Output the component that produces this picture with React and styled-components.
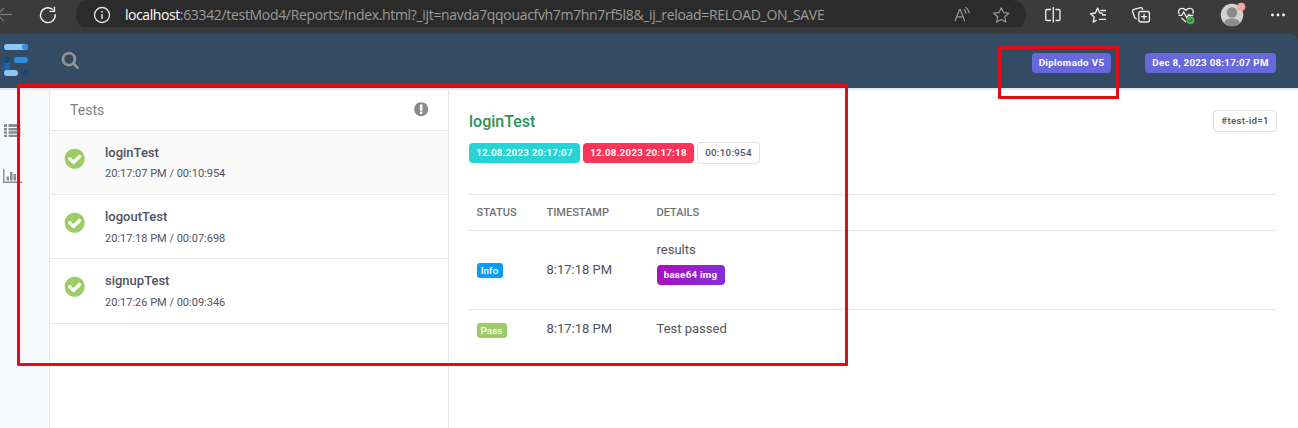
import React from "react";
import styled, { createGlobalStyle } from "styled-components";

const Global = createGlobalStyle`
  * { box-sizing: border-box; }
  body { margin: 0; background: #fff; font-family: Roboto, sans-serif; color: #515365; overflow: hidden; }
`;

const Page = styled.div`
  position: relative;
  width: 1298px;
  height: 428px;
  overflow: hidden;
  display: flex;
  flex-direction: column;
  background: #fff;
`;

const BrowserBar = styled.div`
  height: 34px;
  flex: none;
  display: flex;
  background: #3b3b3b;
`;
const NavButtons = styled.div`
  width: 76px;
  height: 30px;
  flex: none;
`;
const AddressField = styled.div`
  width: 950px;
  height: 30px;
  flex: none;
  display: flex;
  align-items: center;
  background: #2b2b2b;
  border-radius: 13px 15px 15px 15px;
  padding-left: 17px;
`;
const Url = styled.div`
  width: 828px;
  margin-left: 14px;
  font: 14px/20px "Open Sans", "Noto Sans", sans-serif;
  letter-spacing: -0.325px;
  color: #9c9c9c;
  white-space: nowrap;
  b { font-weight: 400; color: #fff; letter-spacing: -0.43px; }
`;
const AddressActions = styled.svg`
  flex: none;
  margin-left: 1px;
`;
const BrowserTools = styled.div`
  width: 272px;
  height: 30px;
`;

const Header = styled.header`
  height: 56px;
  flex: none;
  display: flex;
  align-items: flex-start;
  background: #344b64;
  border-bottom: 2px solid #e6e8ef;
  border-top-right-radius: 7px;
  box-shadow: 7px -7px 0 #3b3b3b;
`;
const HeaderIcons = styled.div`
  width: 100px;
  height: 54px;
  flex: none;
`;
const HeaderBadges = styled.div`
  display: flex;
  gap: 34px;
  margin: 19px 22px 0 auto;
`;

const badgeTones = {
  indigo: "background:#6868dd;color:#fff;",
  cyan: "background:#26d3d5;color:#fff;",
  red: "background:#fb3459;color:#fff;",
  purple: "background:linear-gradient(120deg,#ae0cbc,#7f31db);color:#fff;",
  outline: "background:#fff;color:#515365;border:1px solid #dcdee2;",
};
const Badge = styled.span`
  display: inline-block;
  width: ${(p) => p.$width}px;
  height: ${(p) => (p.$tone === "outline" ? 22 : 20)}px;
  line-height: 20px;
  border-radius: 4px;
  text-align: center;
  white-space: nowrap;
  font-size: 9.75px;
  font-weight: ${(p) => (p.$tone === "outline" ? 500 : 700)};
  letter-spacing: ${(p) => p.$spacing || "0.25px"};
  ${(p) => badgeTones[p.$tone]}
`;
const StatusTag = styled.span`
  display: block;
  width: ${(p) => p.$width}px;
  height: 15px;
  margin-top: ${(p) => p.$offset || 0}px;
  line-height: 15px;
  border-radius: 3px;
  text-align: center;
  font-size: 9.75px;
  font-weight: 500;
  letter-spacing: 0.1px;
  color: #fff;
  background: ${(p) => p.$color};
`;

const Body = styled.div`
  flex: 1;
  display: flex;
  min-height: 0;
`;
const SideNav = styled.nav`
  width: 50px;
  flex: none;
  background: #f7faff;
  border-right: 1px solid #e8e9ec;
`;
const TestList = styled.section`
  width: 399px;
  flex: none;
  border-right: 1px solid #e6e7e9;
`;
const ListHeader = styled.div`
  height: 41px;
  padding: 0 20px;
  display: flex;
  justify-content: space-between;
  border-bottom: 1px solid #e8e8ea;
  font-size: 14px;
  line-height: 41px;
  letter-spacing: 0.05px;
  color: #818286;
`;
const ListIcon = styled.svg`
  display: block;
  width: 16.4px;
  height: 16.4px;
  margin: 11px -1px 0 0;
`;
const TestRow = styled.div`
  height: ${(p) => p.$height}px;
  display: flex;
  padding: 0 13px;
  border-bottom: 1px solid #e8e8ea;
  background: ${(p) => (p.$active ? "#fafafa" : "#fff")};
`;
const CheckIcon = styled.svg`
  width: 23.4px;
  height: 23.4px;
  margin: 16.3px 18.3px 0 0.3px;
  flex: none;
`;
const TestName = styled.div`
  margin-top: 13px;
  font-size: 13px;
  line-height: 18px;
  font-weight: 500;
  color: #4e5063;
`;
const TestTime = styled.div`
  margin-top: ${(p) => p.$gap}px;
  font-size: 11px;
  line-height: 15px;
  color: #515365;
`;

const Details = styled.main`
  flex: 1;
  padding: 20px 21px 0 20px;
`;
const DetailsTop = styled.div`
  height: 84px;
  display: flex;
  justify-content: space-between;
`;
const Title = styled.h1`
  margin: 1px 0 9px;
  font-size: 16px;
  line-height: 22px;
  font-weight: 500;
  color: #2a9159;
`;
const BadgeRow = styled.div`
  display: flex;
  align-items: center;
  gap: 3px;
`;
const Grid = styled.div`
  display: grid;
  grid-template-columns: 70px 110px 1fr;
  height: ${(p) => p.$height}px;
  padding: ${(p) => p.$top || 0}px 0 0 7.5px;
  border-top: 1px solid #e8e8ea;
  align-items: ${(p) => (p.$center ? "center" : "start")};
  font-size: ${(p) => (p.$head ? 11 : 13)}px;
  font-weight: ${(p) => (p.$head ? 500 : 400)};
  line-height: 18px;
  color: ${(p) => (p.$head ? "#6e7075" : "#515358")};
`;
const Attachment = styled.div`
  margin: 6px 0 14px;
  line-height: 0;
`;

const Highlight = styled.div`
  position: absolute;
  left: ${(p) => p.$x}px;
  top: ${(p) => p.$y}px;
  width: ${(p) => p.$w}px;
  height: ${(p) => p.$h}px;
  border: 3px solid #e40c12;
  border-radius: 1px;
`;

const tests = [
  { name: "loginTest", time: "20:17:07 PM / 00:10:954", height: 64, gap: 4 },
  { name: "logoutTest", time: "20:17:18 PM / 00:07:698", height: 64, gap: 5 },
  { name: "signupTest", time: "20:17:26 PM / 00:09:346", height: 65, gap: 5 },
];

const Check = () => (
  <CheckIcon viewBox="0 0 1792 1792" fill="#9ccc65">
    <path d="M1412 734q0-28-18-46l-91-90q-19-19-45-19t-45 19l-408 407-226-226q-19-19-45-19t-45 19l-91 90q-18 18-18 46 0 27 18 45l362 362q19 19 45 19 27 0 46-19l543-543q18-18 18-45zm252 162q0 209-103 385.5t-279.5 279.5-385.5 103-385.5-103-279.5-279.5-103-385.5 103-385.5 279.5-279.5 385.5-103 385.5 103 279.5 279.5 103 385.5z" />
  </CheckIcon>
);

export default function App() {
  return (
    <Page>
      <Global />
      <BrowserBar>
        <NavButtons>
          <svg width="76" height="30" fill="none">
            <path d="M12 14.5H-2M4 8L-2.5 14.5L4 21.5" stroke="#858585" strokeWidth="1.1" />
            <path d="M52.6 9.5A7.4 7.4 0 1 0 55.2 14.2M54.4 6.7V11.4H49.5" stroke="#f4f4f4" strokeWidth="1.4" />
          </svg>
        </NavButtons>
        <AddressField>
          <svg width="18" height="18" fill="none">
            <circle cx="9" cy="9" r="7.5" stroke="#e8e8e8" strokeWidth="1.3" />
            <path d="M9 8v5" stroke="#e8e8e8" strokeWidth="1.4" />
            <circle cx="9" cy="5.7" r=".9" fill="#e8e8e8" />
          </svg>
          <Url>
            <b>localhost</b>:63342/testMod4/Reports/Index.html?_ijt=navda7qqouacfvh7m7hn7rf5l8&amp;_ij_reload=RELOAD_ON_SAVE
          </Url>
          <AddressActions width="66" height="30" fill="none" stroke="#999" strokeWidth="1.2">
            <path d="M1 21L5.5 9.5H6.3L10.7 21M2.7 16.8H9M9.8 9.4q2 1.2 2.3 4.2M11.3 7.2q3.5 2 3.8 6" />
            <path d="M47.3 7.7l2.2 4.9 5.3.6-4 3.6 1.1 5.3-4.6-2.7-4.7 2.7 1.1-5.3-4-3.6 5.3-.6z" strokeLinejoin="round" />
          </AddressActions>
        </AddressField>
        <BrowserTools>
          <svg width="272" height="30" fill="none" stroke="#f0f0f0" strokeWidth="1.3">
            <path d="M25 9.5h-4q-1.3 0-1.3 1.3v8.4q0 1.3 1.3 1.3h4M29.5 9.5h3.2q1.3 0 1.3 1.3v8.4q0 1.3-1.3 1.3h-3.2M27.3 7v15.5" />
            <path d="M77 13.4l-3.3-.4-2.1-5-2.2 5-5 .6 3.8 3.5-1.1 5 3.5-2M74.5 10.5H80M76 15H80M73 19.4H80" strokeLinejoin="round" />
            <path d="M111 19l-1.3-.5q-.9-.4-1.2-1.3l-1.9-5.7q-.4-1.4.9-1.8l6.8-2q1.4-.4 2 .9l.4 1.3" />
            <rect x="112.8" y="11.5" width="10.6" height="10.5" rx="2" />
            <path d="M118.1 13.7v6M115.1 16.7h6" />
            <path d="M153.2 14c-1.5-3 0-5.7 2.8-5.7 2 0 3 .8 3.9 2 .9-1.2 2-2 4-2 2.7 0 4.2 2.7 2.9 5.5M152.5 15.4h3.2l2-3.4 3 5.5 2.2-3 1 1h3.3M155.2 17.6l4.7 4.4" />
            <circle cx="164.4" cy="20.3" r="4" fill="#4caf50" stroke="none" />
            <path d="M162.6 20.3l1.3 1.3 2.3-2.4" stroke="#183d1a" strokeWidth="1" />
            <g stroke="none">
              <circle cx="206" cy="15" r="11.3" fill="#d2d0ce" />
              <circle cx="206" cy="12.5" r="5.2" fill="#8e8c8a" />
              <path d="M198.2 22.5q1.5-4 7.8-4t7.8 4q-3.2 3.8-7.8 3.8t-7.8-3.8z" fill="#8e8c8a" />
              <circle cx="215.3" cy="6.7" r="4" fill="#f4a3a3" />
              <g fill="#fff">
                <circle cx="246.5" cy="15" r="1.4" />
                <circle cx="252" cy="15" r="1.4" />
                <circle cx="257.5" cy="15" r="1.4" />
              </g>
            </g>
          </svg>
        </BrowserTools>
      </BrowserBar>

      <Header>
        <HeaderIcons>
          <svg width="100" height="54">
            <rect x="4" y="26" width="6" height="13" fill="#1a64aa" />
            <rect x="4" y="10" width="24" height="6" rx="3" fill="#8cc6f7" />
            <circle cx="25" cy="13" r="3" fill="#2d8fe5" />
            <circle cx="7" cy="26" r="3" fill="#14487f" />
            <rect x="14" y="23" width="14" height="6" rx="3" fill="#2d8fe5" />
            <rect x="4" y="36" width="14" height="6" rx="3" fill="#8cc6f7" />
            <circle cx="25" cy="39" r="3" fill="#14487f" />
            <g transform="translate(61 16.5) scale(.01035)" fill="#939494">
              <path d="M1216 832q0-185-131.5-316.5t-316.5-131.5-316.5 131.5-131.5 316.5 131.5 316.5 316.5 131.5 316.5-131.5 131.5-316.5zm512 832q0 52-38 90t-90 38q-54 0-90-38l-343-342q-179 124-399 124-143 0-273.5-55.5t-225-150-150-225-55.5-273.5 55.5-273.5 150-225 225-150 273.5-55.5 273.5 55.5 225 150 150 225 55.5 273.5q0 220-124 399l343 343q37 37 37 90z" />
            </g>
          </svg>
        </HeaderIcons>
        <HeaderBadges>
          <Badge $tone="indigo" $width={79} $spacing="0.35px">Diplomado V5</Badge>
          <Badge $tone="indigo" $width={131}>Dec 8, 2023 08:17:07 PM</Badge>
        </HeaderBadges>
      </Header>

      <Body>
        <SideNav>
          <svg width="49" height="110" fill="#8b8c90">
            <path d="M4 34h3v3H4zM8.5 34h12v3h-12zM4 38h3v2.5H4zM8.5 38h12v2.5h-12zM4 41.3h3v2.5H4zM8.5 41.3h12v2.5h-12zM4 44.7h3V47H4zM8.5 44.7h12V47h-12z" />
            <path d="M3 79h1.4v12.4H22V93H3zM6.5 86.5H9v4H6.5zM10 82h2.5v8.5H10zM13.5 84H16v6.5h-2.5zM17.3 80.5h2.5v10h-2.5z" />
          </svg>
        </SideNav>
        <TestList>
          <ListHeader>
            Tests
            <ListIcon viewBox="0 0 1792 1792" fill="#8b8b8f">
              <path d="M896 128q209 0 385.5 103t279.5 279.5 103 385.5-103 385.5-279.5 279.5-385.5 103-385.5-103-279.5-279.5-103-385.5 103-385.5 279.5-279.5 385.5-103zm128 1247v-190q0-14-9-23.5t-22-9.5h-192q-13 0-23 10t-10 23v190q0 13 10 23t23 10h192q13 0 22-9.5t9-23.5zm-2-344l18-621q0-12-10-18-10-8-24-8h-220q-14 0-24 8-10 6-10 18l17 621q0 10 10 17.5t24 7.5h185q14 0 23.5-7.5t10.5-17.5z" />
            </ListIcon>
          </ListHeader>
          {tests.map((t, i) => (
            <TestRow key={t.name} $active={i === 0} $height={t.height}>
              <Check />
              <div>
                <TestName>{t.name}</TestName>
                <TestTime $gap={t.gap}>{t.time}</TestTime>
              </div>
            </TestRow>
          ))}
        </TestList>
        <Details>
          <DetailsTop>
            <div>
              <Title>loginTest</Title>
              <BadgeRow>
                <Badge $tone="cyan" $width={111}>12.08.2023 20:17:07</Badge>
                <Badge $tone="red" $width={111}>12.08.2023 20:17:18</Badge>
                <Badge $tone="outline" $width={63} $spacing="0.3px">00:10:954</Badge>
              </BadgeRow>
            </div>
            <Badge $tone="outline" $width={64}>#test-id=1</Badge>
          </DetailsTop>
          <Grid $height={36} $head $center>
            <div>STATUS</div>
            <div>TIMESTAMP</div>
            <div>DETAILS</div>
          </Grid>
          <Grid $height={79} $center>
            <StatusTag $color="#0d9cf0" $width={26} $offset={1}>Info</StatusTag>
            <div>8:17:18 PM</div>
            <div>
              results
              <Attachment>
                <Badge $tone="purple" $width={68}>base64 img</Badge>
              </Attachment>
            </div>
          </Grid>
          <Grid $height={50} $top={10}>
            <StatusTag $color="#9ccc65" $width={30} $offset={3}>Pass</StatusTag>
            <div>8:17:18 PM</div>
            <div>Test passed</div>
          </Grid>
        </Details>
      </Body>
      <Highlight $x={17} $y={84} $w={831} $h={282} />
      <Highlight $x={998} $y={46} $w={121} $h={53} />
    </Page>
  );
}
